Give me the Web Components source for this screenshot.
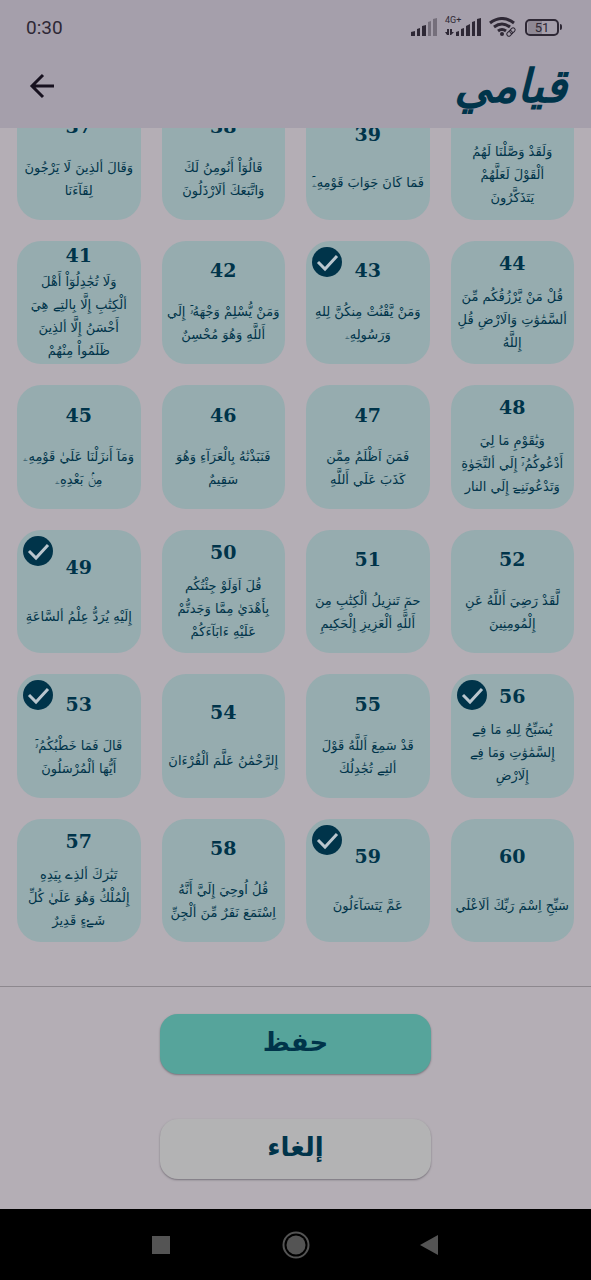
<!DOCTYPE html>
<html lang="ar">
<head>
<meta charset="utf-8">
<meta name="viewport" content="width=device-width, initial-scale=1">
<title>قيامي</title>
<style>
  :root {
    --ink: #00344a;
    --page: #b4aeb5;
    --bar: #a59fab;
    --tile: #96acaf;
    --teal: #56a49b;
    --plain: #b3b3b4;
  }
  body { margin: 0; background: var(--page); font-family: "DejaVu Sans", sans-serif; color: var(--ink); }
</style>
</head>
<body>
<qiyam-app>
  <status-bar slot="top" time="0:30" network="4G+" battery="51"></status-bar>
  <app-header slot="top">قيامي</app-header>

  <verse-tile number="37">وَقَالَ ألذِينَ لَا يَرْجُونَ<br>لِقَآءَنَا</verse-tile>
  <verse-tile number="38">قَالُوٓاْ أَنُومِنُ لَكَ<br>وَاتَّبَعَكَ ألَارْذَلُونَ</verse-tile>
  <verse-tile number="39">فَمَا كَانَ جَوَابَ قَوْمِهِۦٓ</verse-tile>
  <verse-tile>وَلَقَدْ وَصَّلْنَا لَهُمُ<br>ألْقَوْلَ لَعَلَّهُمْ<br>يَتَذَكَّرُونَ</verse-tile>

  <verse-tile number="41">وَلَا تُجَٰدِلُوٓاْ أَهْلَ<br>ألْكِتَٰبِ إِلَّا بِالتِے هِيَ<br>أَحْسَنُ إِلَّا ألذِينَ<br>ظَلَمُواْ مِنْهُمْ</verse-tile>
  <verse-tile number="42">وَمَنْ يُّسْلِمْ وَجْهَهُۥٓ إِلَي<br>أَللَّهِ وَهُوَ مُحْسِنٌ</verse-tile>
  <verse-tile number="43" checked>وَمَنْ يَّقْنُتْ مِنكُنَّ لِلهِ<br>وَرَسُولِهِۦ</verse-tile>
  <verse-tile number="44">قُلْ مَنْ يَّرْزُقُكُم مِّنَ<br>ألسَّمَٰوَٰتِ وَالَارْضِ قُلِ<br>إِللَّهُ</verse-tile>

  <verse-tile number="45">وَمَآ أَنزَلْنَا عَلَيٰ قَوْمِهِۦ<br>مِنۢ بَعْدِهِۦ</verse-tile>
  <verse-tile number="46">فَنَبَذْنَٰهُ بِالْعَرَآءِ وَهُوَ<br>سَقِيمٌ</verse-tile>
  <verse-tile number="47">فَمَنَ اَظْلَمُ مِمَّن<br>كَذَبَ عَلَي أَللَّهِ</verse-tile>
  <verse-tile number="48">وَيَٰقَوْمِ مَا لِيَ<br>أَدْعُوكُمُۥٓ إِلَي ألنَّجَوٰةِ<br>وَتَدْعُونَنِےٓ إِلَي النار</verse-tile>

  <verse-tile number="49" checked>إِلَيْهِ يُرَدُّ عِلْمُ ألسَّاعَةِ</verse-tile>
  <verse-tile number="50">قُلَ اَوَلَوْ جِئْتُكُم<br>بِأَهْدَيٰ مِمَّا وَجَدتُّمْ<br>عَلَيْهِ ءَابَآءَكُمْ</verse-tile>
  <verse-tile number="51">حمِٓ تَنزِيلُ ألْكِتَٰبِ مِنَ<br>أَللَّهِ ألْعَزِيزِ إِلْحَكِيمِ</verse-tile>
  <verse-tile number="52">لَّقَدْ رَضِيَ أَللَّهُ عَنِ<br>إِلْمُومِنِينَ</verse-tile>

  <verse-tile number="53" checked>قَالَ فَمَا خَطْبُكُمُۥٓ<br>أَيُّهَا ألْمُرْسَلُونَ</verse-tile>
  <verse-tile number="54">إِلرَّحْمَٰنُ عَلَّمَ ألْقُرْءَانَ</verse-tile>
  <verse-tile number="55">قَدْ سَمِعَ أَللَّهُ قَوْلَ<br>ألتِے تُجَٰدِلُكَ</verse-tile>
  <verse-tile number="56" checked>يُسَبِّحُ لِلهِ مَا فِے<br>إِلسَّمَٰوَٰتِ وَمَا فِے<br>إِلَارْضِ</verse-tile>

  <verse-tile number="57">تَبَٰرَكَ ألذِے بِيَدِهِ<br>إِلْمُلْكُ وَهُوَ عَلَيٰ كُلِّ<br>شَےْءٍ قَدِيرٌ</verse-tile>
  <verse-tile number="58">قُلُ اُوحِيَ إِلَيَّ أَنَّهُ<br>اِسْتَمَعَ نَفَرٌ مِّنَ ألْجِنِّ</verse-tile>
  <verse-tile number="59" checked>عَمَّ يَتَسَآءَلُونَ</verse-tile>
  <verse-tile number="60">سَبِّحِ اِسْمَ رَبِّكَ ألَاعْلَي</verse-tile>

  <action-button slot="actions" kind="primary">حفظ</action-button>
  <action-button slot="actions">إلغاء</action-button>
  <system-nav slot="bottom"></system-nav>
</qiyam-app>

<script>
const define = (name, html, setup) => {
  const template = document.createElement('template');
  template.innerHTML = html;
  customElements.define(name, class extends HTMLElement {
    connectedCallback() {
      if (this.shadowRoot) return;
      const root = this.attachShadow({ mode: 'open' });
      root.append(template.content.cloneNode(true));
      if (setup) setup(this, root);
    }
  });
};

define('qiyam-app', `
  <style>
    :host { display: flex; flex-direction: column; height: 100vh; }
    header { background: var(--bar); flex: none; }
    main { flex: 1; min-height: 0; overflow: hidden; display: flex; flex-direction: column; justify-content: flex-end; }
    .grid { display: grid; grid-template-columns: repeat(4, minmax(0, 1fr)); gap: 21px; padding: 0 17px 44px; }
    .actions { flex: none; display: flex; flex-direction: column; align-items: center; gap: 45px;
      padding: 27px 0 30px; border-top: 1px solid #8d888e; }
  </style>
  <header><slot name="top"></slot></header>
  <main><div class="grid"><slot></slot></div></main>
  <section class="actions"><slot name="actions"></slot></section>
  <slot name="bottom"></slot>`);

define('status-bar', `
  <style>
    :host { display: flex; align-items: center; justify-content: space-between; height: 54px; padding: 0 29px 0 26px;
      font-family: Roboto, sans-serif; color: #2e2835; }
    .time { font-size: 19px; }
    .icons { display: flex; align-items: center; gap: 8px; }
    svg { display: block; fill: currentColor; }
    .mobile { position: relative; }
    .net { position: absolute; left: 0; top: -3px; font-size: 9px; line-height: 10px; }
    .battery { display: flex; align-items: center; }
    .cell { box-sizing: border-box; width: 34px; height: 17px; border: 2px solid; border-radius: 5px; font-size: 13px;
      line-height: 13px; text-align: center; background: linear-gradient(90deg, #8e8894 50%, transparent 50%) content-box; padding: 0 1px; }
    .tip { width: 2px; height: 6px; background: currentColor; border-radius: 0 2px 2px 0; margin-left: 1px; }
  </style>
  <span class="time"></span>
  <div class="icons">
    <svg width="26" height="18" viewBox="0 0 26 18"><path d="M0 14l4-1v5H0zM6 11l3-1v8H6zM11 8l4-1v11h-4z"/><path opacity=".4" d="M17 4l3-1v15h-3zM22 1l4-1v18h-4z"/></svg>
    <div class="mobile"><span class="net"></span>
      <svg width="36" height="18" viewBox="0 0 36 18"><path d="M2 11h2v6H2L0 14h2zM5 11h2v3h2l-3 3H5zM11 14l3-1v5h-3zM16 11l3-1v8h-3zM21 8l4-2v12h-4zM27 4l3-1v15h-3zM32 1l4-1v18h-4z"/></svg></div>
    <svg width="28" height="20" viewBox="0 0 28 20" style="fill:none;stroke:currentColor;stroke-width:3">
      <path d="M1 6Q13-3 25 6M5 10Q13 4 21 10M9 14Q13 11 17 14"/><circle cx="13" cy="17" r="2" style="fill:currentColor;stroke:none"/>
      <g transform="rotate(-45 22 15)" style="stroke-width:1"><rect x="17" y="13" width="6" height="4" rx="2"/><rect x="21" y="13" width="6" height="4" rx="2"/></g></svg>
    <div class="battery"><span class="cell"></span><span class="tip"></span></div>
  </div>`, (host, root) => {
  root.querySelector('.time').textContent = host.getAttribute('time');
  root.querySelector('.net').textContent = host.getAttribute('network');
  root.querySelector('.cell').textContent = host.getAttribute('battery');
});

define('app-header', `
  <style>
    :host { display: flex; align-items: flex-start; justify-content: space-between; height: 74px; padding: 0 24px 0 26px; }
    button { border: 0; padding: 0; background: none; width: 32px; height: 32px; margin-top: 16px; }
    svg { display: block; fill: none; stroke: #17111f; stroke-width: 3; }
    h1 { margin: 0; font-size: 46px; line-height: 64px; font-weight: bold; font-style: italic; direction: rtl; }
  </style>
  <button type="button" aria-label="رجوع"><svg width="32" height="32" viewBox="0 0 32 32"><path d="M28 16H7M17 5L6 16l11 11"/></svg></button>
  <h1><slot></slot></h1>`);

define('verse-tile', `
  <style>
    :host { display: block; min-width: 0; }
    label { position: relative; display: flex; flex-direction: column; align-items: center; justify-content: space-evenly;
      aspect-ratio: 1; border-radius: 24px; background: var(--tile); }
    input { position: absolute; left: 6px; top: 6px; width: 30px; height: 30px; margin: 0; appearance: none; border-radius: 50%; }
    svg { position: absolute; left: 6px; top: 6px; display: none; pointer-events: none; }
    input:checked { background: var(--ink); }
    input:checked + svg { display: block; }
    .number { min-height: 24px; font: bold 19px/24px "DejaVu Serif", serif; }
    .verse { direction: rtl; white-space: nowrap; text-align: center; font-size: 13px; line-height: 23px; }
  </style>
  <label>
    <input type="checkbox">
    <svg width="30" height="30" viewBox="0 0 30 30"><path d="M6 15l7 7L25 9" fill="none" stroke="#b9c6ce" stroke-width="3"/></svg>
    <span class="number"></span>
    <span class="verse"><slot></slot></span>
  </label>`, (host, root) => {
  root.querySelector('.number').textContent = host.getAttribute('number') || '';
  root.querySelector('input').checked = host.hasAttribute('checked');
});

define('action-button', `
  <style>
    :host { display: block; width: 46%; }
    button { display: block; width: 100%; height: 60px; padding: 0 0 4px; border: 0; border-radius: 18px; color: var(--ink);
      background: var(--plain); box-shadow: 0 1px 2px #77727a; font: bold 26px/40px "DejaVu Sans", sans-serif; direction: rtl; }
    :host([kind="primary"]) button { background: var(--teal); }
  </style>
  <button type="button"><slot></slot></button>`);

define('system-nav', `
  <style>
    :host { display: flex; flex: none; align-items: center; justify-content: center; gap: 107px; height: 71px; background: #000; }
    button { border: 0; padding: 0; background: none; }
    svg { display: block; fill: #545454; }
  </style>
  <button type="button" aria-label="Recent"><svg width="28" height="28" viewBox="0 0 28 28"><path d="M5 5h18v18H5z"/></svg></button>
  <button type="button" aria-label="Home"><svg width="28" height="28" viewBox="0 0 28 28"><circle cx="14" cy="14" r="9.500"/><circle cx="14" cy="14" r="12.500" fill="none" stroke="#545454" stroke-width="2"/></svg></button>
  <button type="button" aria-label="Back"><svg width="28" height="28" viewBox="0 0 28 28"><path d="M3 14L21 4v20z"/></svg></button>`);
</script>
</body>
</html>
